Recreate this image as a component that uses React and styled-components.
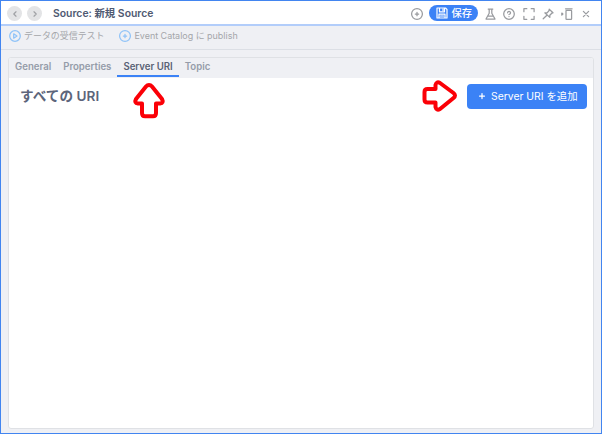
import React from 'react';
import styled, { createGlobalStyle } from 'styled-components';

const Global = createGlobalStyle`
  * { box-sizing: border-box; }
  body { margin: 0; background: #fff; font-family: Inter, "Noto Sans CJK JP", sans-serif; }
  svg { display: block; flex: none; overflow: visible; }
`;

const Window = styled.main`
  width: 602px;
  height: 434px;
  display: flex;
  flex-direction: column;
  overflow: hidden;
  background: #eff0f4;
  border: 1px solid #4285f0;
  white-space: nowrap;
`;

const Header = styled.header`
  height: 25px;
  flex: none;
  display: flex;
  align-items: center;
  background: #fff;
  border-bottom: 2px solid #b2cdfa;
  padding: 2px 6px 0 6px;
`;

const NavButton = styled.button`
  width: 15px;
  height: 15px;
  margin-right: 5px;
  padding: 0;
  border: 0;
  border-radius: 50%;
  background: #e3e4e6;
  display: grid;
  place-items: center;
  color: #a0a2a6;
`;

const Title = styled.h1`
  margin: 1px auto 0 6px;
  font-size: 10.4px;
  line-height: 16px;
  font-weight: 600;
  color: #505a72;
`;

const HeaderActions = styled.div`
  display: flex;
  align-items: center;
  color: #999b9f;
`;

const IconButton = styled.button`
  width: ${(p) => p.$width || 19.3}px;
  height: 16px;
  padding: 0;
  border: 0;
  background: none;
  color: inherit;
  display: grid;
  place-items: center;
`;

const SaveButton = styled.button`
  width: 49px;
  height: 16px;
  margin: -1px 3px 0 3px;
  padding: 0 6px 0 7px;
  border: 0;
  border-radius: 8px;
  background: #3b82f6;
  color: #fff;
  display: flex;
  align-items: center;
  gap: 4px;
  font: 500 10.3px/16px Inter, "Noto Sans CJK JP", sans-serif;
`;

const Toolbar = styled.div`
  height: 24px;
  flex: none;
  display: flex;
  gap: 15px;
  padding: 0 8px;
  border-bottom: 1px solid #dcdfe5;
`;

const ToolAction = styled.button`
  display: flex;
  align-items: center;
  gap: 3px;
  padding: 0 0 3px;
  border: 0;
  background: none;
  color: #a4a6aa;
  font: 400 8.95px/16px Inter, "Noto Sans CJK JP", sans-serif;
  svg { color: #8fc3f8; }
`;

const Panel = styled.section`
  flex: 1;
  margin: 7px 7px 4px;
  display: flex;
  flex-direction: column;
  border: 1px solid #dfe1e5;
  border-radius: 3px;
  background: #fff;
  overflow: hidden;
`;

const Tabs = styled.nav`
  height: 20px;
  flex: none;
  display: flex;
  padding-bottom: 1px;
  background: #eff0f4;
`;

const Tab = styled.button`
  padding: 0 6px;
  border: 0;
  border-bottom: 2px solid ${(p) => (p.$active ? '#3b82f6' : 'transparent')};
  background: none;
  color: ${(p) => (p.$active ? '#596274' : '#959ca9')};
  font: 600 9.62px/16px Inter, sans-serif;
`;

const Content = styled.div`
  display: flex;
  align-items: flex-start;
  justify-content: space-between;
  padding: 6px 6px 0 11px;
`;

const Heading = styled.h2`
  margin: 2px 0 0;
  font-size: 13.6px;
  line-height: 20px;
  font-weight: 600;
  color: #5c657b;
  letter-spacing: 0.05px;
`;

const AddGroup = styled.div`
  display: flex;
  gap: 9px;

  > svg { margin-top: -4px; }
`;

const AddButton = styled.button`
  width: 120px;
  height: 25px;
  padding: 0 0 0 11px;
  border: 0;
  border-radius: 4px;
  background: #3b82f6;
  color: #fff;
  display: flex;
  align-items: center;
  gap: 5px;
  font: 400 10.4px/18px Inter, "Noto Sans CJK JP", sans-serif;

  svg { margin-top: -1px; }
`;

const UpPointer = styled.div`
  position: absolute;
  left: 133px;
  top: 82px;
`;

const Icon = ({ w = 12, h = 12, sw = 1.25, children }) => (
  <svg width={w} height={h} viewBox={`0 0 ${w} ${h}`} fill="none" stroke="currentColor" strokeWidth={sw} strokeLinecap="round" strokeLinejoin="round">
    {children}
  </svg>
);

const CirclePlus = ({ size = 12 }) => (
  <Icon w={size} h={size}>
    <circle cx={size / 2} cy={size / 2} r={size / 2 - 0.6} />
    <path d={`M${size / 2} ${size / 2 - 1.7}v3.4M${size / 2 - 1.7} ${size / 2}h3.4`} />
  </Icon>
);

const Arrow = ({ up }) => (
  <svg width={up ? 32 : 36} height={up ? 37 : 32} viewBox={up ? '0 0 32 37' : '0 0 36 32'} fill="#fff" stroke="#fb0007" strokeWidth="4" strokeLinejoin="round">
    <path d={up
      ? 'M16 3Q17.7 3 19 4.5L29 17Q31 21 27 21.5H23V31Q23 34.3 20 34.3H12Q9 34.3 9 31V21.5H5Q1 21 3 17L13 4.5Q14.3 3 16 3Z'
      : 'M2.5 12Q2.5 9 5.5 9H13.5V5Q14.5 1 18 3L31.5 13Q34.5 15.5 31.5 18L18 29Q14.5 31 13.5 27V22.5H5.5Q2.5 22.5 2.5 19.5Z'} />
  </svg>
);

export default function App() {
  return (
    <Window>
      <Global />
      <Header>
        <NavButton aria-label="Back"><Icon w={6} h={8}><path d="M4 1.8 1.8 4 4 6.2" /></Icon></NavButton>
        <NavButton aria-label="Forward"><Icon w={6} h={8}><path d="M2 1.8 4.2 4 2 6.2" /></Icon></NavButton>
        <Title>Source: 新規 Source</Title>
        <HeaderActions>
          <IconButton aria-label="Add" $width={18}><CirclePlus /></IconButton>
          <SaveButton>
            <Icon sw={1.2}><path d="M1 1h8.5L11 2.5V11H1ZM3.5 1v3.8h5V1M7 2.2v1.3M3 11V7.2h6V11M4.5 9h3" /></Icon>
            保存
          </SaveButton>
          <IconButton aria-label="Test"><Icon w={11}><path d="M3.2 1h4.6M4.2 1v4.2L1 11h9L6.8 5.2V1M2.6 8h5.8" /></Icon></IconButton>
          <IconButton aria-label="Help"><Icon><circle cx="6" cy="6" r="5.3" /><path d="M4.6 4.8Q4.7 3.4 6 3.4t1.5 1.3T6 6.5M6 8.5v.1" /></Icon></IconButton>
          <IconButton aria-label="Expand"><Icon><path d="M3.8.7H.9v3M8.2.7h2.9v3M.9 8.3v3h2.9M11.1 8.3v3H8.2" /></Icon></IconButton>
          <IconButton aria-label="Pin"><Icon><path d="m7.2 1.2 3.8 3.6-1.2.4L7.8 7.3v2.1L2.8 4.8h2.3l2-2.3ZM4.9 7.2 1.2 10.8" /></Icon></IconButton>
          <IconButton aria-label="Dock"><Icon w={12}><rect x="5" y="2.4" width="5.6" height="9" rx="0.6" /><path d="M4.5.8h6.6M.8 5 1.9 6 .8 7Z" /></Icon></IconButton>
          <IconButton aria-label="Close" $width={18}><Icon w={8} h={8}><path d="m1.4 1.4 5.2 5.2M6.6 1.4 1.4 6.6" /></Icon></IconButton>
        </HeaderActions>
      </Header>
      <Toolbar>
        <ToolAction>
          <Icon w={12} h={12}><circle cx="6" cy="6" r="5.3" /><path d="M4.7 3.8v4.4l3.3-2.2Z" /></Icon>
          データの受信テスト
        </ToolAction>
        <ToolAction><CirclePlus />Event Catalog に publish</ToolAction>
      </Toolbar>
      <Panel>
        <Tabs>
          <Tab>General</Tab>
          <Tab>Properties</Tab>
          <Tab $active>Server URI</Tab>
          <Tab>Topic</Tab>
        </Tabs>
        <Content>
          <Heading>すべての URI</Heading>
          <AddGroup>
            <Arrow />
            <AddButton><Icon w={8} h={8}><path d="M4 1.5v5M1.5 4h5" /></Icon>Server URI を追加</AddButton>
          </AddGroup>
        </Content>
      </Panel>
      <UpPointer><Arrow up /></UpPointer>
    </Window>
  );
}
